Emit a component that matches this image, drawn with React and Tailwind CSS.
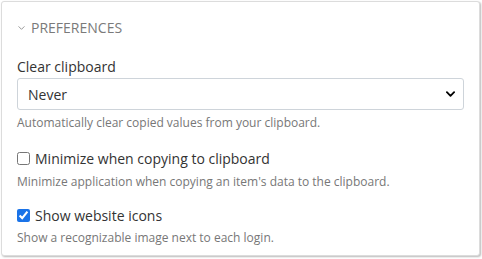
import React, { useState } from 'react';

function Chevron({ className, width = 2 }) {
  return (
    <svg viewBox="0 0 10 6" className={className} fill="none" stroke="currentColor">
      <path d="M1 1l4 4 4-4" strokeWidth={width} strokeLinecap="round" strokeLinejoin="round" />
    </svg>
  );
}

function App() {
  const [clear, setClear] = useState('never');
  const [minimize, setMinimize] = useState(false);
  const [showIcons, setShowIcons] = useState(true);

  return (
    <div className="w-[482px] h-[259px] bg-white p-[1px]" style={{ fontFamily: '"Open Sans", "Noto Sans", sans-serif' }}>
      <div className="w-[479px] border border-[#dcdcdc] rounded-[3px] bg-white shadow-[1px_1px_2px_rgba(0,0,0,0.28)] px-[15px] pt-[15px] pb-[9px]">
        {/* section header */}
        <div className="flex items-center h-[20px] text-[14px] text-[#7a7a7a]">
          <Chevron width={1.3} className="w-[7px] h-[4px] ml-[1px] mr-[6px] mt-[1px] text-[#8a8a8a]" />
          <span className="uppercase">Preferences</span>
        </div>

        <div className="mt-[20px] h-[20px] leading-[20px] text-[14px] text-[#333]">Clear clipboard</div>
        <div className="relative mt-[1px]">
          <select
            value={clear}
            onChange={(e) => setClear(e.target.value)}
            className="appearance-none w-full h-[32px] border border-[#ced4da] rounded-[3px] bg-white pl-[10px] text-[14px] text-[#333] outline-none"
            style={{ fontFamily: '"Open Sans", "Noto Sans", sans-serif' }}
          >
            <option value="never">Never</option>
            <option value="10">10 seconds</option>
            <option value="20">20 seconds</option>
            <option value="30">30 seconds</option>
          </select>
          <Chevron className="absolute right-[9px] top-[13px] w-[9px] h-[6px] text-black pointer-events-none" />
        </div>
        <div className="mt-[5px] h-[16px] leading-[16px] text-[12px] text-[#777]">
          Automatically clear copied values from your clipboard.
        </div>

        <label className="mt-[17px] flex items-center h-[20px] text-[14px] text-[#333]">
          <input
            type="checkbox"
            checked={minimize}
            onChange={(e) => setMinimize(e.target.checked)}
            className="m-0 mr-[5px] w-[13px] h-[13px]"
          />
          Minimize when copying to clipboard
        </label>
        <div className="mt-[6px] h-[16px] leading-[16px] text-[12px] text-[#777]">
          Minimize application when copying an item's data to the clipboard.
        </div>

        <label className="mt-[15px] flex items-center h-[20px] text-[14px] text-[#333]">
          <input
            type="checkbox"
            checked={showIcons}
            onChange={(e) => setShowIcons(e.target.checked)}
            className="m-0 mr-[5px] w-[13px] h-[13px] accent-[#1a73e8]"
          />
          Show website icons
        </label>
        <div className="mt-[5px] h-[16px] leading-[16px] text-[12px] text-[#777]">
          Show a recognizable image next to each login.
        </div>
      </div>
    </div>
  );
}

export default App;
